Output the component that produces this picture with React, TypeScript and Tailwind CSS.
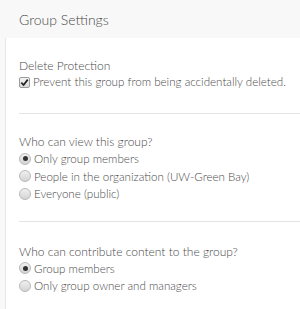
import React from "react";

function Checkbox() {
  return (
    <span className="inline-flex h-[11px] w-[11px] shrink-0 items-center justify-center rounded-[2px] border border-[#9a9a9a] bg-gradient-to-b from-[#f4f4f4] to-[#d9d9d9]">
      <svg width="9" height="9" viewBox="0 0 10 10">
        <path d="M1.5 5.2 L4 7.8 L8.6 1.8" fill="none" stroke="#222" strokeWidth="1.9" />
      </svg>
    </span>
  );
}

function Radio({ checked }: { checked?: boolean }) {
  return (
    <span className="inline-flex h-[12px] w-[12px] shrink-0 items-center justify-center rounded-full border border-[#b8b8b8] bg-gradient-to-b from-[#f0f0f0] to-[#d4d4d4]">
      {checked && <span className="h-[5px] w-[5px] rounded-full bg-[#333333]" />}
    </span>
  );
}

function Option({ checked, label }: { checked?: boolean; label: string }) {
  return (
    <div className="flex h-[17.5px] items-center gap-[3px]">
      <Radio checked={checked} />
      <span>{label}</span>
    </div>
  );
}

export default function App() {
  return (
    <div
      className="h-[309px] w-[300px] overflow-hidden bg-[#f8f8f8] font-light text-[#4a4a4a]"
      style={{ fontFamily: "Lato, 'Open Sans', sans-serif" }}
    >
      <div className="flex h-[38px] items-center pl-[19px] text-[14px]">Group Settings</div>
      <div className="ml-[5px] h-full border-l border-[#e8e8e8] bg-white pl-[13px] pt-[19px] text-[11.6px]">
        <div className="pb-[23px]">
          <div className="text-[12px] leading-[17px]">Delete Protection</div>
          <div className="flex h-[16px] items-center gap-[3px]">
            <Checkbox />
            <span>Prevent this group from being accidentally deleted.</span>
          </div>
        </div>
        <div className="border-t border-[#e3e3e3] pt-[19px] pb-[18px]">
          <div className="text-[12px] leading-[17px]">Who can view this group?</div>
          <Option checked label="Only group members" />
          <Option label="People in the organization (UW-Green Bay)" />
          <Option label="Everyone (public)" />
        </div>
        <div className="border-t border-[#e3e3e3] pt-[21px]">
          <div className="text-[12px] leading-[17px]">Who can contribute content to the group?</div>
          <Option checked label="Group members" />
          <Option label="Only group owner and managers" />
        </div>
      </div>
    </div>
  );
}
